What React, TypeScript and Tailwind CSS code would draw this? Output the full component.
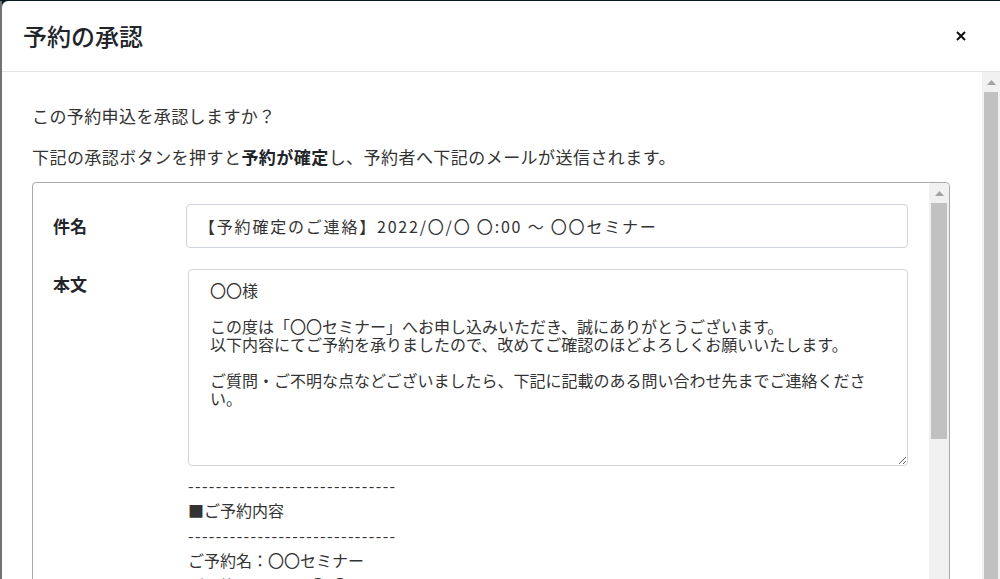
import React from 'react';

const FONT = '"Noto Sans CJK JP", "Noto Sans", sans-serif';

const bodyText = [
  '〇〇様',
  '',
  'この度は「〇〇セミナー」へお申し込みいただき、誠にありがとうございます。',
  '以下内容にてご予約を承りましたので、改めてご確認のほどよろしくお願いいたします。',
  '',
  'ご質問・ご不明な点などございましたら、下記に記載のある問い合わせ先までご連絡くださ',
  'い。',
].join('\n');

const ScrollArrow: React.FC = () => (
  <svg width="9" height="5" viewBox="0 0 9 5">
    <polygon points="0,5 4.5,0 9,5" fill="#a3a3a3" />
  </svg>
);

// fake classic scrollbar (up arrow + thumb)
const ScrollBar: React.FC<{ className: string; thumb: string }> = ({ className, thumb }) => (
  <div className={`flex flex-col bg-[#f1f1f1] ${className}`}>
    <div className="flex h-[20px] shrink-0 items-center justify-center">
      <ScrollArrow />
    </div>
    <div className={`mx-[2px] bg-[#c1c1c1] ${thumb}`} />
  </div>
);

const App: React.FC = () => {
  return (
    <div className="flex h-[579px] w-[1000px] overflow-hidden bg-[#06191d]" style={{ fontFamily: FONT }}>
      <div className="mt-px w-[2px] shrink-0 bg-[#6f7376]" />
      <div className="mt-px flex flex-1 flex-col rounded-tl-md bg-white text-[#212529]">
        {/* header */}
        <div className="flex h-[71px] shrink-0 items-center justify-between border-b border-[#e5e5e5] pl-[21px] pr-[31px]">
          <h1 className="text-[24px] font-medium leading-none">予約の承認</h1>
          <button className="flex h-4 w-4 items-center justify-center">
            <svg width="10" height="10" viewBox="0 0 10 10">
              <path d="M1 1 L9 9 M9 1 L1 9" stroke="#111" strokeWidth="2" />
            </svg>
          </button>
        </div>

        {/* body */}
        <div className="flex flex-1 overflow-hidden">
          <div className="flex-1 pl-[30px] pr-[32px] pt-[31px]">
            <p className="text-[17px] leading-[26px] tracking-[0.4px] text-[#333]">この予約申込を承認しますか？</p>
            <p className="mt-[15px] text-[17px] leading-[26px] tracking-[0.45px] text-[#333]">
              下記の承認ボタンを押すと<b className="font-bold text-[#212529]">予約が確定</b>し、予約者へ下記のメールが送信されます。
            </p>

            <div className="mt-[12px] flex h-[420px] rounded border border-[#a9a9a9]">
              <div className="flex-1 pl-[20px] pr-[21px] pt-[21px]">
                <div className="flex items-center">
                  <label className="w-[133px] shrink-0 text-[17px] font-bold">件名</label>
                  <input
                    readOnly
                    value="【予約確定のご連絡】2022/〇/〇 〇:00 ～ 〇〇セミナー"
                    className="h-[44px] flex-1 rounded border border-[#ced4da] px-3 text-[16px] tracking-[1.8px] text-[#333] outline-none"
                  />
                </div>
                <div className="mt-[21px] flex">
                  <label className="w-[135px] shrink-0 pt-[2px] text-[17px] font-bold">本文</label>
                  <div className="flex-1">
                    <textarea
                      readOnly
                      wrap="off"
                      defaultValue={bodyText}
                      className="block h-[197px] w-full resize-y overflow-hidden rounded border border-[#ced4da] pl-[21px] pt-[11px] text-[16px] leading-[18px] text-[#333] outline-none"
                    />
                    <div className="mt-[7px] text-[16px] leading-[25px] text-[#333]">
                      <div className="tracking-[1.4px]">------------------------------</div>
                      <div>■ご予約内容</div>
                      <div className="tracking-[1.4px]">------------------------------</div>
                      <div>ご予約名：〇〇セミナー</div>
                      <div>ご予約日：2022/〇/〇</div>
                    </div>
                  </div>
                </div>
              </div>
              <ScrollBar className="w-[20px] shrink-0 rounded-tr" thumb="h-[236px]" />
            </div>
          </div>
          <ScrollBar className="w-[18px] shrink-0" thumb="flex-1" />
        </div>
      </div>
    </div>
  );
};

export default App;
